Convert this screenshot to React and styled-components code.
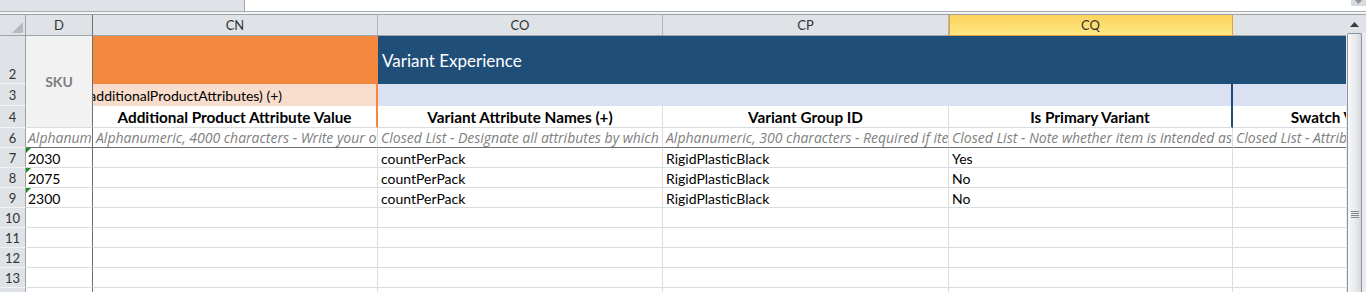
import React from "react";
import styled, { createGlobalStyle } from "styled-components";

// Excel 2010 look
const HEADER_BG = "#dfe2e7";
const HEADER_LINE = "#9ea3a8";
const GRID = "#dadcdd";
const FREEZE = "#6f6f6f";
const ORANGE = "#f4883f";
const PEACH = "#f8ddcc";
const NAVY = "#1f4e79";
const SKY = "#d9e1f2";

const GlobalStyle = createGlobalStyle`
  html, body {
    margin: 0;
    padding: 0;
    background: #fff;
  }
  body {
    font-family: Lato, "Liberation Sans", sans-serif;
    overflow: hidden;
  }
`;

const Window = styled.div`
  width: 1366px;
  height: 292px;
  display: flex;
  flex-direction: column;
  overflow: hidden;
`;

const FormulaBar = styled.div`
  height: 11px;
  display: flex;
  border-bottom: 1px solid #a9adb2;
`;

const FormulaLeft = styled.div`
  width: 244px;
  background: ${HEADER_BG};
  border-right: 1px solid #a3a7ac;
`;

const FormulaInput = styled.div`
  flex: 1;
  background: #fff;
`;

const ExpandButton = styled.div`
  width: 15px;
  height: 6px;
  background: #d6d9dd;
  display: flex;
  justify-content: center;
  align-items: flex-start;
`;

const Divider = styled.div`
  height: 2px;
  background: #f3f4f5;
  border-bottom: 1px solid ${HEADER_LINE};
`;

const SheetArea = styled.div`
  flex: 1;
  display: flex;
  min-height: 0;
`;

const Grid = styled.div`
  flex: 1;
  min-width: 0;
  overflow: hidden;
  display: grid;
  grid-template-columns: 26px 67px 285px 285px 286px 284px 304px;
  grid-template-rows: 21px 48px 22px 22px 20px repeat(8, 20px);
  align-content: start;
`;

const Cell = styled.div`
  box-sizing: border-box;
  display: flex;
  align-items: center;
  overflow: hidden;
  white-space: nowrap;
  font-size: 14px;
  color: #000;
  min-width: 0;
`;

const CornerCell = styled(Cell)`
  background: ${HEADER_BG};
  border-right: 1px solid ${HEADER_LINE};
  border-bottom: 1px solid ${HEADER_LINE};
  justify-content: flex-end;
  align-items: flex-end;
  padding: 0 2px 2px 0;
`;

const ColHeader = styled(Cell)`
  justify-content: center;
  font-size: 13px;
  color: #333;
  background: ${(p) =>
    p.$selected ? "linear-gradient(#fcd35c, #ffe884)" : HEADER_BG};
  border-right: 1px solid
    ${(p) => (p.$selected ? "#e0a23c" : p.$freeze ? FREEZE : "#b3b7bc")};
  border-bottom: 1px solid ${(p) => (p.$selected ? "#e0a23c" : HEADER_LINE)};
  box-shadow: ${(p) => (p.$selected ? "inset 1px 0 0 #e0a23c" : "none")};
`;

const RowHeader = styled(Cell)`
  justify-content: center;
  align-items: ${(p) => (p.$tall ? "flex-end" : "center")};
  padding-bottom: ${(p) => (p.$tall ? "1px" : "0")};
  font-size: 13px;
  color: #333;
  background: ${HEADER_BG};
  border-right: 1px solid ${HEADER_LINE};
  border-bottom: 1px solid #f2f3f5;
`;

const SkuCell = styled(Cell)`
  grid-row: span 3;
  justify-content: center;
  background: #f2f2f2;
  border-right: 1px solid ${FREEZE};
  border-bottom: 1px solid ${GRID};
  color: #7f7f7f;
  font-weight: 700;
`;

const Banner = styled(Cell)`
  grid-column: span ${(p) => p.$span || 1};
  background: ${(p) => (p.$tone === "navy" ? NAVY : ORANGE)};
  color: #fff;
  font-size: 17px;
  padding-left: 4px;
`;

const SubBanner = styled(Cell)`
  grid-column: span ${(p) => p.$span || 1};
  justify-content: ${(p) => (p.$clipLeft ? "flex-end" : "flex-start")};
  padding-right: ${(p) => (p.$clipLeft ? "94px" : "0")};
  background: ${(p) => (p.$tone === "sky" ? SKY : PEACH)};
  border-right: ${(p) => (p.$edge ? `2px solid ${p.$edge}` : "none")};
`;

const FieldHeader = styled(Cell)`
  justify-content: center;
  font-weight: 700;
  font-size: 15.3px;
  background: #fff;
  border-bottom: 1px solid ${GRID};
  border-right: ${(p) => (p.$edge ? `2px solid ${p.$edge}` : `1px solid ${GRID}`)};
`;

const HintCell = styled(Cell)`
  padding-left: ${(p) => (p.$freeze ? "2px" : "3px")};
  font-family: "Open Sans", Lato, sans-serif;
  font-style: italic;
  font-size: 14px;
  color: #808080;
  border-bottom: 1px solid ${FREEZE};
  border-right: 1px solid ${(p) => (p.$freeze ? FREEZE : GRID)};
`;

const DataCell = styled(Cell)`
  position: relative;
  padding-left: ${(p) => (p.$freeze ? "2px" : "3px")};
  padding-top: 1px;
  border-bottom: 1px solid ${GRID};
  border-right: 1px solid ${(p) => (p.$freeze ? FREEZE : GRID)};

  &::before {
    content: "";
    display: ${(p) => (p.$flag ? "block" : "none")};
    position: absolute;
    left: 0;
    top: 0;
    border-top: 5px solid #1e8a1e;
    border-right: 5px solid transparent;
  }
`;

const VScroll = styled.div`
  width: 20px;
  display: flex;
  flex-direction: column;
  background: #e9ebee;
`;

const ScrollArrow = styled.div`
  height: 18px;
  background: ${HEADER_BG};
  display: flex;
  justify-content: center;
  align-items: center;
  padding-right: 3px;
`;

const ScrollThumb = styled.div`
  flex: 1;
  margin: 0 4px 0 1px;
  border: 1px solid #8a9199;
  border-bottom: none;
  border-radius: 2px 2px 0 0;
  background: linear-gradient(to right, #f7f8f9, #e4e6e9 70%, #d5d8dc);
  display: flex;
  justify-content: center;
  padding-top: 177px;
`;

const Grip = styled.div`
  width: 8px;
  height: 7px;
  background: repeating-linear-gradient(
    to bottom,
    #7f8790 0,
    #7f8790 1px,
    transparent 1px,
    transparent 2px
  );
`;

const columns = ["D", "CN", "CO", "CP", "CQ", "CR"];

const fields = [
  "Additional Product Attribute Value",
  "Variant Attribute Names (+)",
  "Variant Group ID",
  "Is Primary Variant",
  "Swatch Variant Attribute (+)",
];

const hints = [
  "Alphanumeric, 50 characters - Required",
  "Alphanumeric, 4000 characters - Write your own value here",
  "Closed List - Designate all attributes by which the items vary",
  "Alphanumeric, 300 characters - Required if item is a variant",
  "Closed List - Note whether item is intended as primary variant",
  "Closed List - Attribute used for swatch images",
];

const rows = [
  { n: 7, sku: "2030", names: "countPerPack", group: "RigidPlasticBlack", primary: "Yes" },
  { n: 8, sku: "2075", names: "countPerPack", group: "RigidPlasticBlack", primary: "No" },
  { n: 9, sku: "2300", names: "countPerPack", group: "RigidPlasticBlack", primary: "No" },
  { n: 10 },
  { n: 11 },
  { n: 12 },
  { n: 13 },
  { n: 14 },
];

export default function App() {
  return (
    <>
      <GlobalStyle />
      <Window>
        <FormulaBar>
          <FormulaLeft />
          <FormulaInput />
          <ExpandButton>
            <svg width="9" height="5" viewBox="0 0 9 5">
              <path d="M1 0 L8 0 L4.5 4 Z" fill="#8c9299" />
            </svg>
          </ExpandButton>
        </FormulaBar>
        <Divider />
        <SheetArea>
          <Grid>
            <CornerCell>
              <svg width="11" height="11" viewBox="0 0 11 11">
                <path d="M11 0 L11 11 L0 11 Z" fill="#b5bac0" />
              </svg>
            </CornerCell>
            {columns.map((c) => (
              <ColHeader key={c} $selected={c === "CQ"} $freeze={c === "D"}>
                {c}
              </ColHeader>
            ))}

            <RowHeader $tall>2</RowHeader>
            <SkuCell>SKU</SkuCell>
            <Banner $tone="orange" />
            <Banner $tone="navy" $span={4}>
              Variant Experience
            </Banner>

            <RowHeader>3</RowHeader>
            <SubBanner $tone="peach" $edge={ORANGE} $clipLeft>
              Additional Product Attributes (additionalProductAttributes) (+)
            </SubBanner>
            <SubBanner $tone="sky" $span={3} $edge={NAVY} />
            <SubBanner $tone="sky" />

            <RowHeader>4</RowHeader>
            {fields.map((f, i) => (
              <FieldHeader
                key={f}
                $edge={i === 0 ? ORANGE : i === 3 ? NAVY : undefined}
              >
                {f}
              </FieldHeader>
            ))}

            <RowHeader>6</RowHeader>
            {hints.map((h, i) => (
              <HintCell key={h} $freeze={i === 0}>
                {h}
              </HintCell>
            ))}

            {rows.map((r) => (
              <React.Fragment key={r.n}>
                <RowHeader>{r.n}</RowHeader>
                <DataCell $freeze $flag={!!r.sku}>
                  {r.sku}
                </DataCell>
                <DataCell />
                <DataCell>{r.names}</DataCell>
                <DataCell>{r.group}</DataCell>
                <DataCell>{r.primary}</DataCell>
                <DataCell />
              </React.Fragment>
            ))}
          </Grid>
          <VScroll>
            <ScrollArrow>
              <svg width="9" height="5" viewBox="0 0 9 5">
                <path d="M4.5 0 L9 5 L0 5 Z" fill="#3c3c3c" />
              </svg>
            </ScrollArrow>
            <ScrollThumb>
              <Grip />
            </ScrollThumb>
          </VScroll>
        </SheetArea>
      </Window>
    </>
  );
}
